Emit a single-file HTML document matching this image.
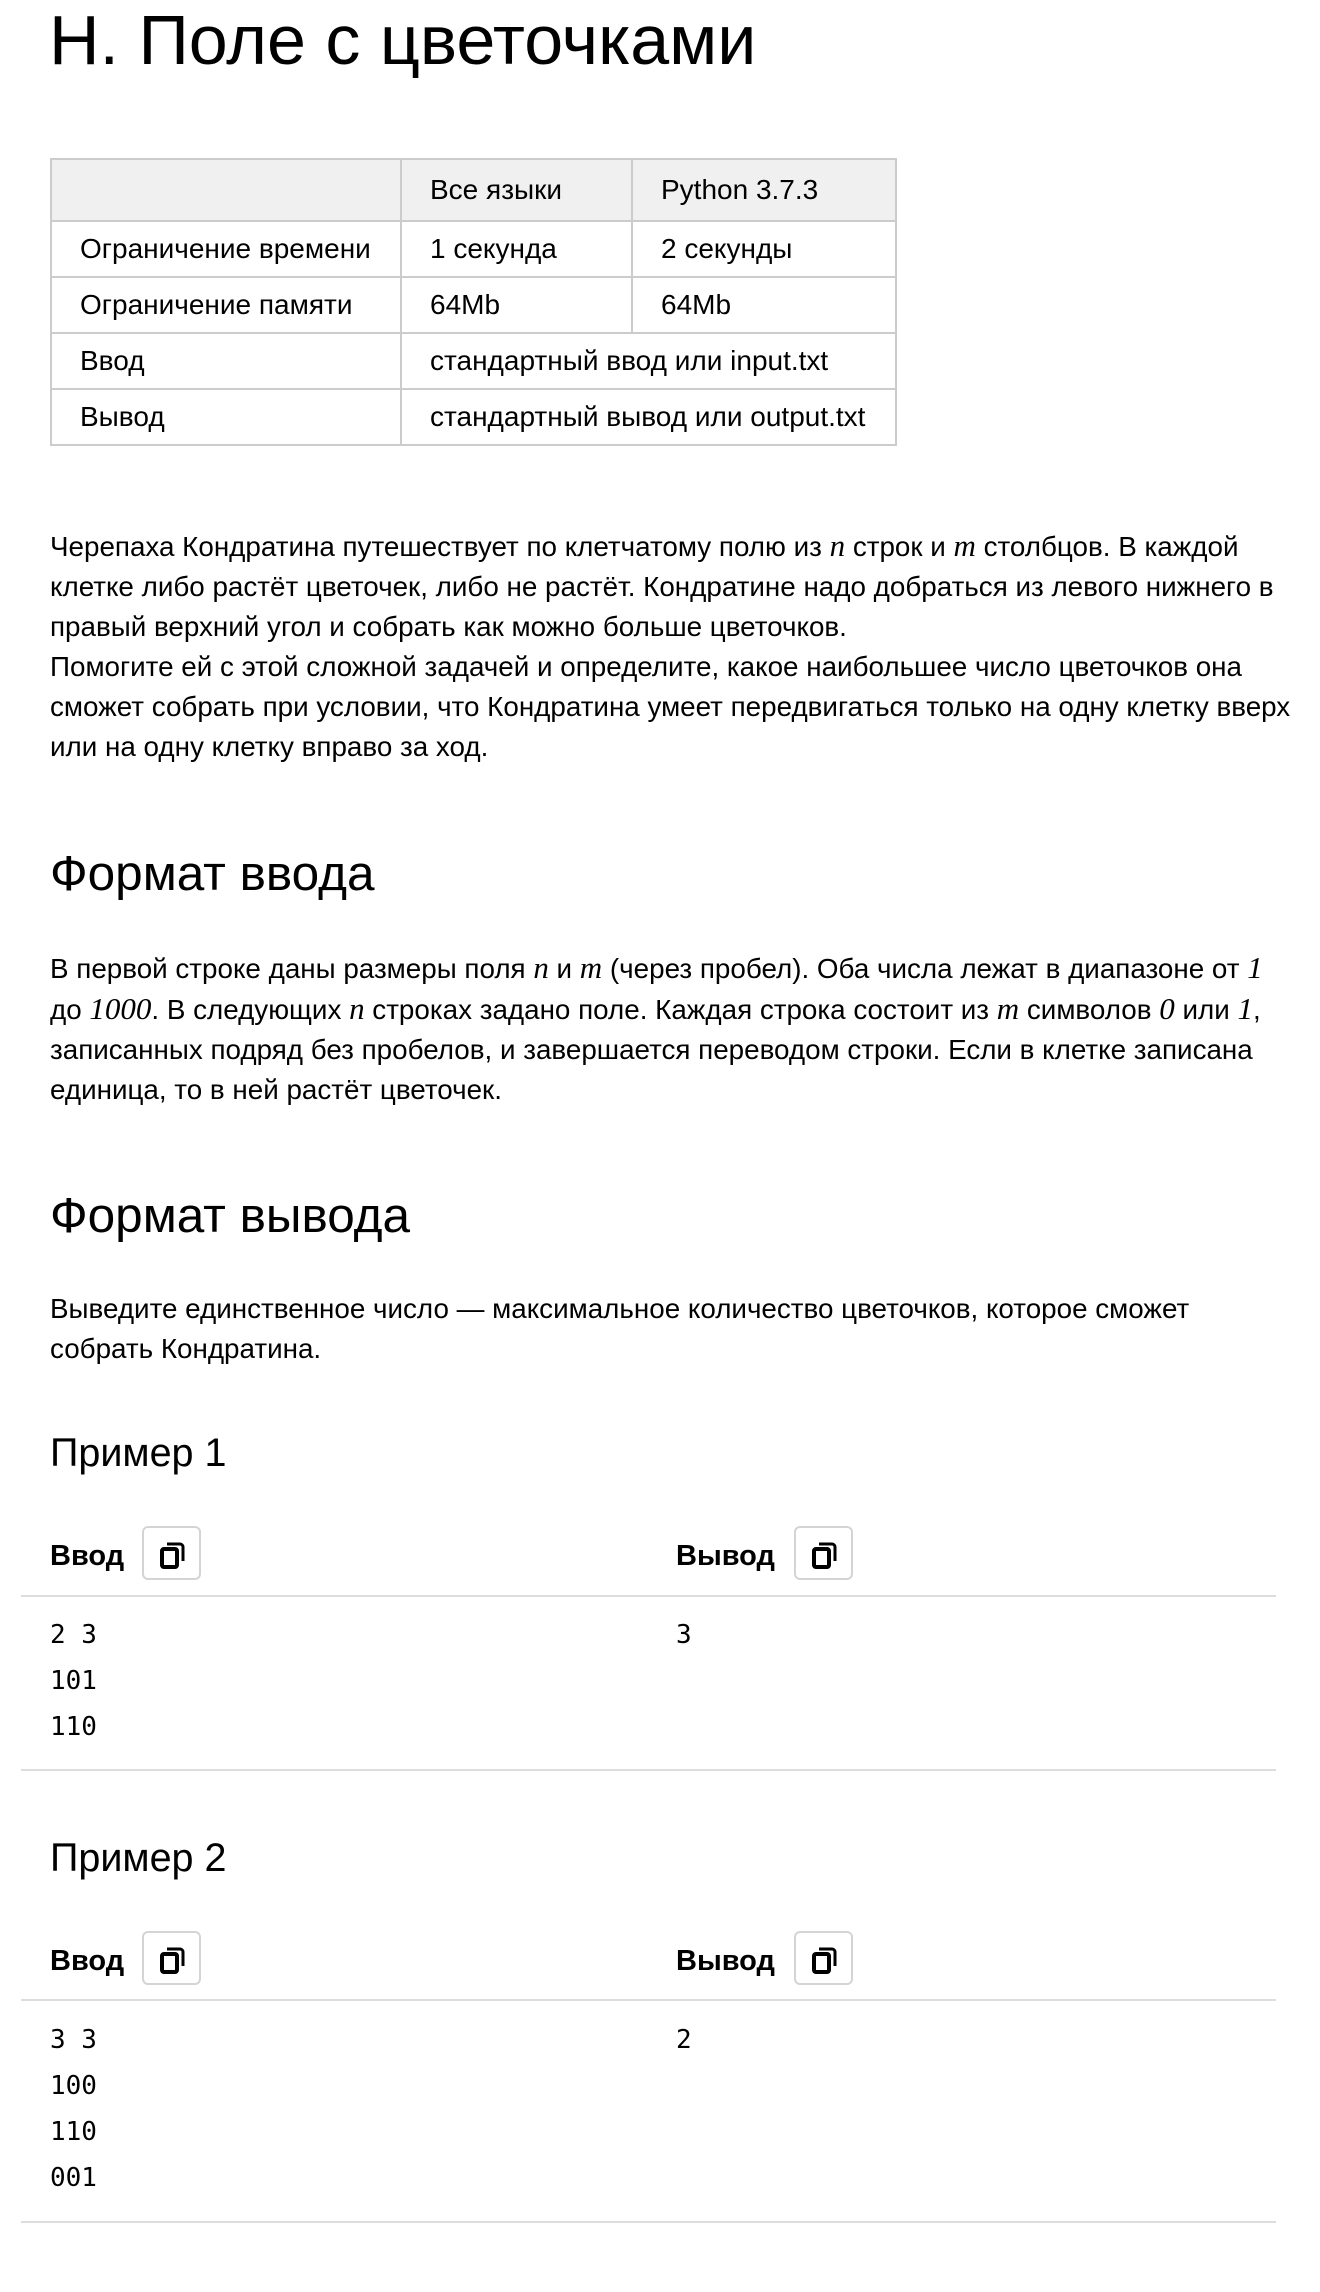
<!DOCTYPE html>
<html><head><meta charset="utf-8"><style>
*{margin:0;padding:0;box-sizing:border-box}
body{width:1320px;height:2292px;background:#fff;color:#000;font-family:"Liberation Sans",Arial,sans-serif;position:relative;overflow:hidden}
h1{position:absolute;left:49px;top:0px;font-size:70px;font-weight:400;line-height:80px;white-space:nowrap}
table{position:absolute;left:50px;top:158px;border-collapse:collapse;font-size:28px}
td{border:2px solid #ccc;padding:0 0 0 28px;height:56px;vertical-align:middle;white-space:nowrap}
tr.h td{background:#f0f0f0;height:62px}
.p{position:absolute;left:50px;font-size:27.8px;line-height:40px;width:1250px}
i.m{font-family:"Liberation Serif",serif;font-size:31px}
h2{position:absolute;left:50px;font-size:49.5px;font-weight:400;line-height:56px}
h3{position:absolute;left:50px;font-size:39.5px;font-weight:400;line-height:44px}
.lb{position:absolute;font-size:29px;font-weight:700;line-height:40px}
.btn{position:absolute;width:59px;height:54px;border:2px solid #d4d4d4;border-radius:6px}
.btn svg{position:absolute;left:16px;top:13px}
.ln{position:absolute;left:21px;width:1255px;height:2px;background:#ddd}
.code{position:absolute;font-family:"DejaVu Sans Mono","Liberation Mono",monospace;font-size:26px;line-height:46px;white-space:pre}
</style></head><body>
<h1>H. Поле с цветочками</h1>
<table>
<tr class="h"><td style="width:350px"></td><td style="width:231px">Все языки</td><td style="width:264px">Python 3.7.3</td></tr>
<tr><td>Ограничение времени</td><td>1 секунда</td><td>2 секунды</td></tr>
<tr><td>Ограничение памяти</td><td>64Mb</td><td>64Mb</td></tr>
<tr><td>Ввод</td><td colspan="2">стандартный ввод или input.txt</td></tr>
<tr><td>Вывод</td><td colspan="2">стандартный вывод или output.txt</td></tr>
</table>
<div class="p" style="top:526px">Черепаха Кондратина путешествует по клетчатому полю из <i class="m">n</i> строк и <i class="m">m</i> столбцов. В каждой клетке либо растёт цветочек, либо не растёт. Кондратине надо добраться из левого нижнего в правый верхний угол и собрать как можно больше цветочков.<br>Помогите ей с этой сложной задачей и определите, какое наибольшее число цветочков она сможет собрать при условии, что Кондратина умеет передвигаться только на одну клетку вверх или на одну клетку вправо за ход.</div>
<h2 style="top:846px">Формат ввода</h2>
<div class="p" style="top:948px">В первой строке даны размеры поля <i class="m">n</i> и <i class="m">m</i> (через пробел). Оба числа лежат в диапазоне от <i class="m">1</i> до <i class="m">1000</i>. В следующих <i class="m">n</i> строках задано поле. Каждая строка состоит из <i class="m">m</i> символов <i class="m">0</i> или <i class="m">1</i>, записанных подряд без пробелов, и завершается переводом строки. Если в клетке записана единица, то в ней растёт цветочек.</div>
<h2 style="top:1188px">Формат вывода</h2>
<div class="p" style="top:1289px">Выведите единственное число — максимальное количество цветочков, которое сможет собрать Кондратина.</div>

<h3 style="top:1431px">Пример 1</h3>
<div class="lb" style="left:50px;top:1536px">Ввод</div>
<div class="btn" style="left:142px;top:1526px"><svg width="26" height="28" viewBox="0 0 26 28"><rect x="2" y="8" width="15" height="18" rx="2" fill="none" stroke="#000" stroke-width="4"/><path d="M7 3H20a3 3 0 0 1 3 3V20" fill="none" stroke="#000" stroke-width="3"/></svg></div>
<div class="lb" style="left:676px;top:1536px">Вывод</div>
<div class="btn" style="left:794px;top:1526px"><svg width="26" height="28" viewBox="0 0 26 28"><rect x="2" y="8" width="15" height="18" rx="2" fill="none" stroke="#000" stroke-width="4"/><path d="M7 3H20a3 3 0 0 1 3 3V20" fill="none" stroke="#000" stroke-width="3"/></svg></div>
<div class="ln" style="top:1595px"></div>
<div class="code" style="left:50px;top:1612px">2 3
101
110</div>
<div class="code" style="left:676px;top:1612px">3</div>
<div class="ln" style="top:1769px"></div>

<h3 style="top:1836px">Пример 2</h3>
<div class="lb" style="left:50px;top:1941px">Ввод</div>
<div class="btn" style="left:142px;top:1931px"><svg width="26" height="28" viewBox="0 0 26 28"><rect x="2" y="8" width="15" height="18" rx="2" fill="none" stroke="#000" stroke-width="4"/><path d="M7 3H20a3 3 0 0 1 3 3V20" fill="none" stroke="#000" stroke-width="3"/></svg></div>
<div class="lb" style="left:676px;top:1941px">Вывод</div>
<div class="btn" style="left:794px;top:1931px"><svg width="26" height="28" viewBox="0 0 26 28"><rect x="2" y="8" width="15" height="18" rx="2" fill="none" stroke="#000" stroke-width="4"/><path d="M7 3H20a3 3 0 0 1 3 3V20" fill="none" stroke="#000" stroke-width="3"/></svg></div>
<div class="ln" style="top:1999px"></div>
<div class="code" style="left:50px;top:2017px">3 3
100
110
001</div>
<div class="code" style="left:676px;top:2017px">2</div>
<div class="ln" style="top:2221px"></div>
</body></html>
